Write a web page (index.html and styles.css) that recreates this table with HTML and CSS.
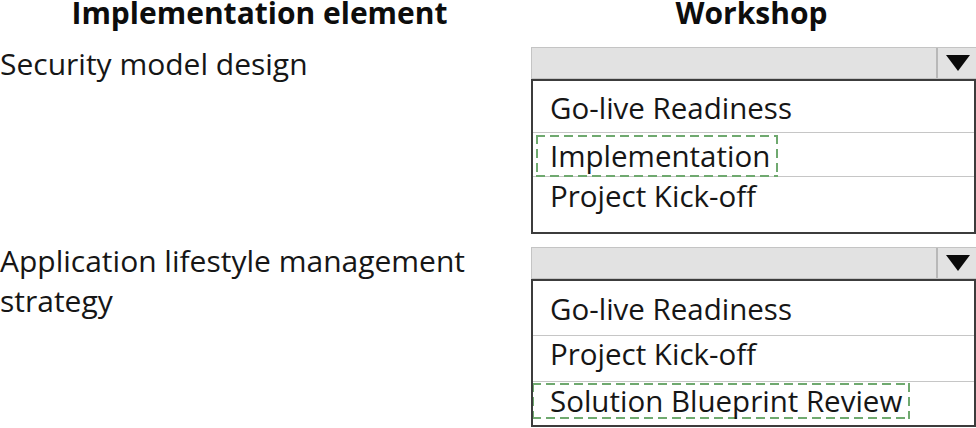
FILE: index.html
```html
<!DOCTYPE html>
<html>
<head>
<meta charset="utf-8">
<link rel="stylesheet" href="styles.css">
</head>
<body>
<div class="page">
  <div class="head head-left">Implementation element</div>
  <div class="head head-right">Workshop</div>

  <div class="label label-a">Security model design</div>
  <div class="widget">
    <div class="bar"><div class="bar-fill"></div><div class="bar-btn"><span class="tri"></span></div></div>
    <div class="list list-a">
      <div class="item">Go-live Readiness</div>
      <div class="item"><span class="sel">Implementation</span></div>
      <div class="item">Project Kick-off</div>
    </div>
  </div>

  <div class="label label-b">Application lifestyle management strategy</div>
  <div class="widget widget-b">
    <div class="bar"><div class="bar-fill"></div><div class="bar-btn"><span class="tri"></span></div></div>
    <div class="list list-b">
      <div class="item">Go-live Readiness</div>
      <div class="item">Project Kick-off</div>
      <div class="item"><span class="sel sel-wide">Solution Blueprint Review</span></div>
    </div>
  </div>
</div>
</body>
</html>
```

FILE: styles.css
```css
html, body {
  margin: 0;
  padding: 0;
  background: #ffffff;
  overflow: hidden;
}
.page {
  width: 976px;
  height: 428px;
  display: grid;
  grid-template-columns: 531px 445px;
  grid-template-rows: 47px 187px 194px;
  font-family: "Open Sans", "Noto Sans", sans-serif;
  color: #161616;
}
.head {
  font-weight: 700;
  font-size: 30px;
  line-height: 24px;
  padding-top: 1px;
  text-align: center;
  color: #0d0d0d;
}
.head-left { padding-right: 12px; }
.head-right { padding-right: 4px; }
.label {
  font-size: 30px;
  line-height: 40px;
  margin-top: -3px;
  padding-right: 40px;
}
.label-b { margin-top: 7px; }
.widget {
  display: flex;
  flex-direction: column;
}
.widget-b { padding-top: 13px; }
.bar {
  height: 30px;
  display: flex;
  background: #e2e2e2;
  border: 1px solid #c4c4c4;
  border-right: none;
  margin-right: -1px;
}
.bar-fill { flex: 1; }
.bar-btn {
  width: 39px;
  border-left: 2px solid #b8b8b8;
  display: flex;
  align-items: center;
  justify-content: center;
}
.tri {
  width: 0;
  height: 0;
  border-left: 12px solid transparent;
  border-right: 12px solid transparent;
  border-top: 16px solid #0a0a0a;
}
.list {
  border: 2px solid #3c3c3c;
  font-size: 29.5px;
  box-sizing: border-box;
  overflow: hidden;
}
.list-a {
  padding-top: 8px;
  height: 155px;
}
.list-b {
  padding-top: 10px;
  height: 148px;
}
.item {
  height: 43px;
  line-height: 38px;
  padding-left: 17px;
  border-top: 1px solid #c6c6c6;
}
.item:first-child { border-top: none; }
.list-b .item { height: 45px; line-height: 36px; }
.list-b .item:first-child { height: 44px; }
.sel {
  display: inline-block;
  vertical-align: top;
  line-height: 38px;
  margin-left: -14px;
  padding: 2px 8px 2px 14px;
  margin-top: 2px;
  background:
    repeating-linear-gradient(90deg, #6fa96f 0 9px, transparent 9px 14px) left top / 100% 2px no-repeat,
    repeating-linear-gradient(90deg, #6fa96f 0 9px, transparent 9px 14px) left bottom / 100% 2px no-repeat,
    repeating-linear-gradient(180deg, #6fa96f 0 9px, transparent 9px 14px) left top / 2px 100% no-repeat,
    repeating-linear-gradient(180deg, #6fa96f 0 9px, transparent 9px 14px) right top / 2px 100% no-repeat;
}
.sel-wide {
  margin-left: -18px;
  padding-left: 18px;
  padding-right: 8px;
  line-height: 32px;
  margin-top: 1px;
}
```
